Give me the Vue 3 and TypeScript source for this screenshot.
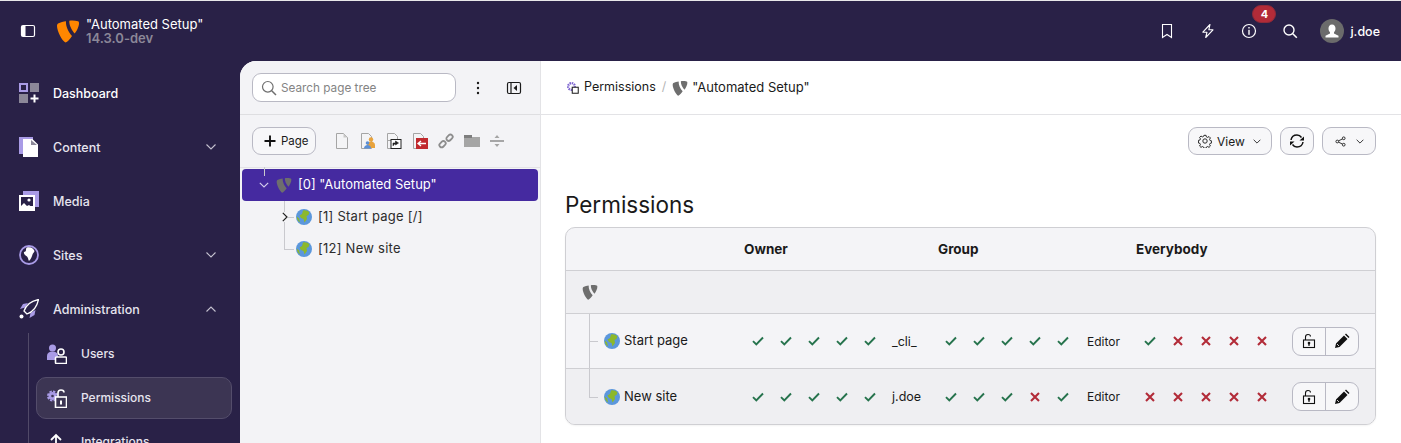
<script setup lang="ts">
interface NavItem {
  label: string;
  icon: string;
  chevron?: 'up' | 'down';
}

interface PermRow {
  name: string;
  owner: number[];
  ownerName: string;
  group: number[];
  groupName: string;
  everybody: number[];
}

const navItems: NavItem[] = [
  { label: 'Dashboard', icon: 'dashboard' },
  { label: 'Content', icon: 'content', chevron: 'down' },
  { label: 'Media', icon: 'media' },
  { label: 'Sites', icon: 'sites', chevron: 'down' },
  { label: 'Administration', icon: 'admin', chevron: 'up' },
];

const rows: PermRow[] = [
  { name: 'Start page', owner: [1, 1, 1, 1, 1], ownerName: '_cli_', group: [1, 1, 1, 1, 1], groupName: 'Editor', everybody: [1, 0, 0, 0, 0] },
  { name: 'New site', owner: [1, 1, 1, 1, 1], ownerName: 'j.doe', group: [1, 1, 1, 0, 1], groupName: 'Editor', everybody: [0, 0, 0, 0, 0] },
];

const logoBody = 'M2 4.500C4.500 3.200 7.500 2.400 10 2.200C9.500 7 12.500 13 16 17C14 20 11.500 23 9.500 23.500C6 22 1 12 1 7C1 6 1.400 5 2 4.500Z';
const logoWing = 'M13.300 1.800C15.500 1.500 19 1.500 22 2.200C23 2.500 23 3.500 23 4.500C23 7 21 12 18.500 14.500C15.500 11 13 6 13.300 1.800Z';
</script>

<template>
  <div class="app">
    <header class="topbar">
      <svg class="top-toggle" viewBox="0 0 16 16" width="16" height="16">
        <rect x="1.500" y="2.500" width="13" height="11" rx="1.500" fill="none" stroke="#fff" stroke-width="1.200" />
        <rect x="2" y="3" width="3.500" height="10" fill="#fff" />
      </svg>
      <svg class="top-logo" viewBox="0 0 24 24" width="24" height="24">
        <path :d="logoBody" fill="#ff8700" />
        <path :d="logoWing" fill="#ff8700" />
      </svg>
      <div class="site">
        <div class="site-name">"Automated Setup"</div>
        <div class="site-version">14.3.0-dev</div>
      </div>
      <div class="top-actions">
        <svg viewBox="0 0 16 16" width="16" height="16"><path d="M3.500 1.500h9v13L8 11.500l-4.500 3z" fill="none" stroke="#fff" stroke-width="1.100" /></svg>
        <svg viewBox="0 0 16 16" width="16" height="16"><path d="M10 1.500 2.800 9.200H7L5.700 14.500 13 6.800H8.800z" fill="none" stroke="#fff" stroke-width="1.100" stroke-linejoin="round" /></svg>
        <span class="info">
          <svg viewBox="0 0 16 16" width="16" height="16">
            <circle cx="8" cy="8" r="6.500" fill="none" stroke="#fff" stroke-width="1.200" />
            <rect x="7.300" y="6.800" width="1.400" height="5" fill="#fff" />
            <rect x="7.300" y="4" width="1.400" height="1.500" fill="#fff" />
          </svg>
          <span class="badge">4</span>
        </span>
        <svg viewBox="0 0 16 16" width="16" height="16"><circle cx="7" cy="7" r="5" fill="none" stroke="#fff" stroke-width="1.400" /><path d="m10.800 10.800 4 4" stroke="#fff" stroke-width="1.600" /></svg>
        <div class="user">
          <span class="avatar">
            <svg viewBox="0 0 24 24" width="24" height="24">
              <circle cx="12" cy="12" r="12" fill="#6b6b6b" />
              <path d="M12 5.500c2.300 0 3.500 1.800 3.500 4 0 1.600-.7 3-1.500 3.800v1.200l4.500 2.200v1.800h-13v-1.800l4.500-2.200v-1.200c-.8-.8-1.500-2.200-1.500-3.800 0-2.200 1.200-4 3.500-4z" fill="#fff" />
            </svg>
          </span>
          <span class="user-name">j.doe</span>
        </div>
      </div>
    </header>

    <div class="body">
      <aside class="sidebar">
        <div v-for="item in navItems" :key="item.label" class="nav-item">
          <svg class="nav-icon" viewBox="0 0 20 20" width="20" height="20">
            <template v-if="item.icon === 'dashboard'">
              <rect x="1" y="1" width="7" height="7" fill="none" stroke="#a99be6" stroke-width="2" />
              <rect x="11" y="0" width="9" height="9" fill="#8b8798" />
              <rect x="0" y="11" width="9" height="9" fill="#8b8798" />
              <path d="M15.500 11.500v8M11.500 15.500h8" stroke="#fff" stroke-width="2" />
            </template>
            <template v-else-if="item.icon === 'content'">
              <rect x="0" y="0" width="14" height="17" fill="#a99be6" />
              <path d="M5 3h8l5 5v11H5z" fill="#fff" stroke="#fff" stroke-width="2" />
              <path d="M12 3l6 5h-6z" fill="#8b8798" />
            </template>
            <template v-else-if="item.icon === 'media'">
              <rect x="4" y="0" width="16" height="16" fill="#a99be6" />
              <rect x="0" y="4" width="16" height="16" fill="#fff" />
              <rect x="2" y="6" width="12" height="9" fill="#292147" />
              <circle cx="10" cy="9" r="1.600" fill="#fff" />
              <path d="M2 15l3-3 3 3 2-1 4 3v1H2z" fill="#fff" />
            </template>
            <template v-else-if="item.icon === 'sites'">
              <circle cx="10" cy="10" r="9" fill="#292147" stroke="#a99be6" stroke-width="1.800" />
              <path d="M8 2.500c3-1 6.500.5 7.500 3.500-.3 1.500-1.500 2-2 3.500-.5 2-1.500 4.500-3.500 6.500-1-1.500-.5-3-2-4.500C5.500 10 4.500 8.500 5 7c1 0 2-1 2-2 0-1 0-2 1-2.500z" fill="#fff" />
            </template>
            <template v-else>
              <path d="M6 8.500 1 10l3-5 5-1zM11.500 14l-1 5 5-3 1-5z" fill="#a99be6" />
              <path d="M5 12C7 6 12 2 19.500.5 18 8 14 13 8 15z" fill="#292147" stroke="#fff" stroke-width="1.300" />
              <circle cx="2.500" cy="17.500" r="2" fill="#fff" />
            </template>
          </svg>
          <span class="nav-label" :class="{ 'nav-label-bright': item.icon === 'dashboard' }">{{ item.label }}</span>
          <svg v-if="item.chevron" class="nav-chevron" :class="{ up: item.chevron === 'up' }" viewBox="0 0 10 6" width="10" height="6">
            <path d="M.5.500 5 5 9.500.500" fill="none" stroke="#c5c2d0" stroke-width="1.100" />
          </svg>
        </div>
        <div class="sub-nav">
          <div class="sub-item">
            <svg viewBox="0 0 20 20" width="20" height="20">
              <circle cx="5.500" cy="4" r="3.500" fill="#a99be6" />
              <path d="M0 16v-4c0-3 2-4.500 5.500-4.500S11 9 11 12v4z" fill="#a99be6" />
              <circle cx="14" cy="8" r="3" fill="#292147" stroke="#fff" stroke-width="1.600" />
              <rect x="8.500" y="13" width="11" height="6.500" rx="1" fill="#292147" stroke="#fff" stroke-width="1.600" />
            </svg>
            <span>Users</span>
          </div>
          <div class="sub-item active">
            <svg viewBox="0 0 20 20" width="20" height="20">
              <circle cx="5.500" cy="8" r="4.600" fill="none" stroke="#a99be6" stroke-width="1.800" stroke-dasharray="2.400 1.200" />
              <circle cx="5.500" cy="8" r="4" fill="#a99be6" />
              <circle cx="5.500" cy="8" r="1.300" fill="#3c3553" />
              <path d="M11 9V5c0-2 1-3 3-3s3 1 3 2.500" fill="none" stroke="#fff" stroke-width="1.600" />
              <rect x="8.500" y="9" width="11" height="10.500" fill="#3c3553" stroke="#fff" stroke-width="1.600" />
              <rect x="13" y="12.500" width="2" height="4" fill="#fff" />
            </svg>
            <span>Permissions</span>
          </div>
          <div class="sub-item">
            <svg viewBox="0 0 20 20" width="20" height="20">
              <path d="M9 20V3M4 8l5-5 5 5" fill="none" stroke="#fff" stroke-width="1.800" />
              <circle cx="15" cy="15" r="3" fill="#a99be6" />
            </svg>
            <span>Integrations</span>
          </div>
        </div>
      </aside>

      <div class="main">
        <section class="tree-panel">
          <div class="tree-search">
            <div class="search-input">
              <svg viewBox="0 0 16 16" width="16" height="16"><circle cx="6.800" cy="6.800" r="5.300" fill="none" stroke="#6f6f6f" stroke-width="1.200" /><path d="m10.700 10.700 4.300 4.300" stroke="#6f6f6f" stroke-width="1.500" /></svg>
              <span>Search page tree</span>
            </div>
            <svg class="dots" viewBox="0 0 4 14" width="4" height="14"><circle cx="2" cy="2" r="1.200" /><circle cx="2" cy="7" r="1.200" /><circle cx="2" cy="12" r="1.200" /></svg>
            <svg class="collapse" viewBox="0 0 16 16" width="16" height="16">
              <rect x="1.500" y="2.500" width="13" height="11" rx="1.500" fill="none" stroke="#1a1a1a" stroke-width="1.200" />
              <path d="M5 3v10" stroke="#1a1a1a" stroke-width="1.200" />
              <path d="M11 5v6L7.500 8z" fill="#1a1a1a" />
            </svg>
          </div>
          <div class="tree-toolbar">
            <button class="btn btn-page">
              <svg viewBox="0 0 12 12" width="12" height="12"><path d="M6 .5v11M.5 6h11" stroke="#111" stroke-width="1.900" /></svg>
              Page
            </button>
            <div class="tool-icons">
              <svg viewBox="0 0 16 16" width="16" height="16"><path d="M2.500.500h7l4 4v11h-11z" fill="#f4f4f6" stroke="#a5a5a5" /><path d="M9.500.500l4 4h-4z" fill="#c8c8c8" /></svg>
              <svg viewBox="0 0 16 16" width="16" height="16"><path d="M1.500.500h7l3 3v12h-10z" fill="#f4f4f6" stroke="#a5a5a5" /><circle cx="11" cy="6.500" r="2.200" fill="#e8a33d" /><path d="M7 12c0-2 2-3.500 4-3.500s4 1.500 4 3.500v3H7z" fill="#e8a33d" /><path d="M4 15.500c0-2 1.500-3.500 3.500-3.500s3.500 1.500 3.500 3.500z" fill="#5b8fd6" /><circle cx="7.500" cy="10" r="1.800" fill="#5b8fd6" /></svg>
              <svg viewBox="0 0 16 16" width="16" height="16"><path d="M1.500.500h7l3 3v4h-10z" fill="#f4f4f6" stroke="#a5a5a5" /><path d="M1.500 7v8.500h4" fill="none" stroke="#a5a5a5" /><rect x="5" y="6.500" width="10" height="9" fill="#fff" stroke="#222" /><path d="M7 13v-3h3M9.500 8l3 2-3 2z" fill="#222" stroke="#222" stroke-width=".6" /></svg>
              <svg viewBox="0 0 16 16" width="16" height="16"><path d="M1.500.500h7l3 3v12h-10z" fill="#f4f4f6" stroke="#a5a5a5" /><rect x="4" y="5" width="12" height="11" fill="#c1292e" /><path d="M6 10.500h8M9 8l-3 2.500L9 13" fill="none" stroke="#fff" stroke-width="1.300" /></svg>
              <svg viewBox="0 0 16 16" width="16" height="16" fill="none" stroke="#8d8d8d" stroke-width="1.800"><rect x="1" y="9" width="7" height="4.500" rx="2.200" transform="rotate(-45 4.500 11.200)" /><rect x="8" y="2.500" width="7" height="4.500" rx="2.200" transform="rotate(-45 11.500 4.700)" /></svg>
              <svg viewBox="0 0 16 16" width="16" height="16"><path d="M0 2h7l1 2h8v10H0z" fill="#a5a5a5" /><rect x="0" y="2" width="8" height="3" fill="#7e7e7e" /></svg>
              <svg viewBox="0 0 14 14" width="14" height="14"><path d="M0 7h14" stroke="#8d8d8d" stroke-width="1.400" /><path d="M7 1l2.500 3h-5zM7 13l2.500-3h-5z" fill="#a5a5a5" /></svg>
            </div>
          </div>
          <div class="tree">
            <div class="tree-root">
              <svg class="chev" viewBox="0 0 10 6" width="10" height="6"><path d="M.8.800 5 5 9.200.800" fill="none" stroke="#cfc8ea" stroke-width="1.200" /></svg>
              <svg viewBox="0 0 24 24" width="16" height="16"><path :d="logoBody" fill="#6e6e6e" /><path :d="logoWing" fill="#6e6e6e" /></svg>
              <span>[0] "Automated Setup"</span>
            </div>
            <div class="tree-child">
              <svg class="chev-right" viewBox="0 0 6 10" width="6" height="10"><path d="M.8.800 5 5 .8 9.200" fill="none" stroke="#222" stroke-width="1.200" /></svg>
              <svg viewBox="0 0 16 16" width="16" height="16"><circle cx="8" cy="8" r="8" fill="#5b97dc" /><path d="M7 1.500c2-.8 5 0 6.500 2l-1 2.500-2 1 .5 3-2.500 3.500-1-3.500L5 9 3.500 6.500 6 5z" fill="#8cb82b" /><path d="M.8 7.500 3 9.500l1 4C2 12.500.7 10 .8 7.500z" fill="#8cb82b" /></svg>
              <span>[1] Start page [/]</span>
            </div>
            <div class="tree-child last">
              <svg viewBox="0 0 16 16" width="16" height="16"><circle cx="8" cy="8" r="8" fill="#5b97dc" /><path d="M7 1.500c2-.8 5 0 6.500 2l-1 2.500-2 1 .5 3-2.500 3.500-1-3.500L5 9 3.500 6.500 6 5z" fill="#8cb82b" /><path d="M.8 7.500 3 9.500l1 4C2 12.500.7 10 .8 7.500z" fill="#8cb82b" /></svg>
              <span>[12] New site</span>
            </div>
          </div>
        </section>

        <section class="content">
          <div class="crumbs">
            <svg viewBox="0 0 16 16" width="12" height="12">
              <circle cx="6" cy="6" r="4.500" fill="none" stroke="#7c63d0" stroke-width="3" stroke-dasharray="2 1" />
              <rect x="7" y="7" width="8" height="8" fill="#fff" stroke="#222" stroke-width="1.400" />
            </svg>
            <span class="crumb-first">Permissions</span>
            <span class="crumb-sep">/</span>
            <svg viewBox="0 0 24 24" width="16" height="16"><path :d="logoBody" fill="#6e6e6e" /><path :d="logoWing" fill="#6e6e6e" /></svg>
            <span class="crumb-last">"Automated Setup"</span>
          </div>
          <div class="doc-bar">
            <button class="btn btn-view">
              <svg viewBox="0 0 16 16" width="14" height="14" fill="none" stroke="#222" stroke-width="1.100"><circle cx="8" cy="8" r="2.500" /><path d="M6.800 1.500h2.400l.4 1.800 1.400.6 1.600-1 1.600 1.600-1 1.600.6 1.400 1.800.4v2.400l-1.800.4-.6 1.400 1 1.600-1.600 1.600-1.600-1-1.400.6-.4 1.400H6.800l-.4-1.400-1.400-.6-1.600 1-1.600-1.600 1-1.600-.6-1.400-1.700-.4V7.300l1.700-.4.600-1.400-1-1.600 1.600-1.600 1.600 1 1.400-.6z" /></svg>
              View
              <svg class="view-chev" viewBox="0 0 10 6" width="8" height="5"><path d="M.8.800 5 5 9.200.800" fill="none" stroke="#333" stroke-width="1.200" /></svg>
            </button>
            <button class="btn btn-icon">
              <svg viewBox="0 0 16 16" width="16" height="16" fill="none" stroke="#111" stroke-width="1.500"><path d="M2 7c.5-3 3-5 6-5 2 0 3.500 1 4.500 2.500" /><path d="M14 9c-.5 3-3 5-6 5-2 0-3.500-1-4.500-2.500" /><path d="M15 3.500v4h-4.500zM1 12.500v-4h4.500z" fill="#111" stroke="none" /></svg>
            </button>
            <button class="btn btn-share">
              <svg viewBox="0 0 12 12" width="11" height="11" fill="none" stroke="#222" stroke-width="1"><circle cx="2.500" cy="6" r="1.500" /><circle cx="9.500" cy="2.500" r="1.500" /><circle cx="9.500" cy="9.500" r="1.500" /><path d="M3.800 5.300 8.200 3.200M3.800 6.700l4.400 2.100" /></svg>
              <svg viewBox="0 0 10 6" width="8" height="5"><path d="M.8.800 5 5 9.200.800" fill="none" stroke="#333" stroke-width="1.200" /></svg>
            </button>
          </div>
          <div class="doc">
            <h1>Permissions</h1>
            <div class="table">
              <div class="row row-head">
                <span class="head-owner">Owner</span>
                <span class="head-group">Group</span>
                <span class="head-everybody">Everybody</span>
              </div>
              <div class="row row-root">
                <svg viewBox="0 0 24 24" width="16" height="16"><path :d="logoBody" fill="#6e6e6e" /><path :d="logoWing" fill="#6e6e6e" /></svg>
              </div>
              <div v-for="(r, i) in rows" :key="r.name" class="row row-page" :class="{ 'row-alt': i === 1 }">
                <div class="page-name">
                  <svg viewBox="0 0 16 16" width="16" height="16"><circle cx="8" cy="8" r="8" fill="#5b97dc" /><path d="M7 1.500c2-.8 5 0 6.500 2l-1 2.500-2 1 .5 3-2.500 3.500-1-3.500L5 9 3.500 6.500 6 5z" fill="#8cb82b" /><path d="M.8 7.500 3 9.500l1 4C2 12.500.7 10 .8 7.500z" fill="#8cb82b" /></svg>
                  <span>{{ r.name }}</span>
                </div>
                <template v-for="(set, s) in [r.owner, r.group, r.everybody]" :key="s">
                  <span v-for="(on, p) in set" :key="p" class="perm">
                    <svg v-if="on" viewBox="0 0 12 10" width="12" height="10"><path d="M1 5.200 4.300 8.500 11 1.500" fill="none" stroke="#26734d" stroke-width="1.900" /></svg>
                    <svg v-else viewBox="0 0 10 10" width="10" height="10"><path d="M1 1l8 8M9 1 1 9" fill="none" stroke="#b22b38" stroke-width="2.100" /></svg>
                  </span>
                  <span v-if="s === 0" class="perm-owner">{{ r.ownerName }}</span>
                  <span v-if="s === 1" class="perm-group">{{ r.groupName }}</span>
                </template>
                <div class="btn-group">
                  <button>
                    <svg viewBox="0 0 16 16" width="16" height="16"><path d="M4.500 7V4c0-1.500 1-2.500 2.500-2.500S9.500 2.500 9.500 3.500" fill="none" stroke="#111" stroke-width="1.100" /><rect x="2.500" y="7" width="11" height="7.500" fill="none" stroke="#111" stroke-width="1.100" /><circle cx="8" cy="10" r="1.300" fill="#111" /><rect x="7.300" y="10" width="1.400" height="2.800" fill="#111" /></svg>
                  </button>
                  <button>
                    <svg viewBox="0 0 16 16" width="16" height="16"><path d="M1 15l1-4.500 8-8L13.500 6l-8 8zM11 1.500l1-1 3.500 3.500-1 1z" fill="#111" /><path d="M3 11l2 2" stroke="#fff" stroke-width=".8" /></svg>
                  </button>
                </div>
              </div>
            </div>
          </div>
        </section>
      </div>
    </div>
  </div>
</template>

<style scoped>
.app {
  width: 1401px;
  height: 443px;
  overflow: hidden;
  background: #292147;
  border-top: 1px solid #e8e8ea;
  box-sizing: border-box;
  font-family: Inter, "Liberation Sans", sans-serif;
  font-size: 13px;
  color: #1a1a1a;
}

.topbar {
  height: 60px;
  display: flex;
  align-items: center;
  color: #fff;
}

.top-toggle {
  margin-left: 20px;
}

.top-logo {
  margin-left: 20px;
}

.site {
  margin-left: 6px;
  line-height: 14px;
  font-size: 13px;
}

.site-version {
  color: #8b8798;
  font-weight: 600;
}

.top-actions {
  margin-left: auto;
  display: flex;
  align-items: center;
  gap: 25px;
  padding-right: 21px;
}

.info {
  position: relative;
  display: flex;
}

.badge {
  position: absolute;
  top: -18px;
  left: 11px;
  width: 24px;
  height: 18px;
  box-sizing: border-box;
  border: 1px solid #8f2a38;
  border-radius: 9px;
  background: #b22b38;
  color: #fff;
  font-size: 11px;
  font-weight: 700;
  display: flex;
  align-items: center;
  justify-content: center;
}

.user {
  display: flex;
  align-items: center;
  gap: 6px;
  margin-left: -3px;
  font-size: 12.5px;
  font-weight: 500;
}

.avatar {
  display: flex;
}

.body {
  display: flex;
  height: 382px;
}

.sidebar {
  width: 240px;
  flex-shrink: 0;
  color: #e6e4ee;
  padding-top: 5px;
  box-sizing: border-box;
  font-size: 12.5px;
}

.nav-item {
  height: 54px;
  display: flex;
  align-items: center;
  padding: 0 24px 0 19px;
  font-weight: 500;
}

.nav-icon {
  flex-shrink: 0;
}

.nav-label {
  margin-left: 14px;
}

.nav-label-bright {
  color: #fff;
}

.nav-chevron {
  margin-left: auto;
}

.nav-chevron.up {
  transform: rotate(180deg);
}

.sub-nav {
  margin-left: 28px;
  border-left: 1px solid #514a68;
  padding: 0 8px 0 7px;
  margin-top: -3px;
}

.sub-item {
  height: 42px;
  box-sizing: border-box;
  margin-bottom: 2px;
  display: flex;
  align-items: center;
  gap: 14px;
  padding-left: 10px;
  font-size: 12px;
  font-weight: 500;
  border: 1px solid transparent;
  border-radius: 10px;
}

.sub-item span {
  margin-bottom: 2px;
}

.sub-item svg {
  flex-shrink: 0;
}

.sub-item.active {
  background: #3c3553;
  border-color: #544d6b;
}

.main {
  flex: 1;
  display: flex;
  background: #fff;
  border-radius: 16px 0 0 0;
  overflow: hidden;
  min-width: 0;
}

.tree-panel {
  width: 301px;
  flex-shrink: 0;
  background: #f3f3f6;
  border-right: 1px solid #e3e3e6;
  box-sizing: border-box;
  color: #2c2c2c;
}

.tree-search {
  height: 53px;
  display: flex;
  align-items: center;
  padding-left: 12px;
  border-bottom: 1px solid #dedee1;
}

.search-input {
  width: 204px;
  height: 29px;
  box-sizing: border-box;
  background: #fff;
  border: 1px solid #b9b9c4;
  border-radius: 9px;
  display: flex;
  align-items: center;
  gap: 4px;
  padding-left: 8px;
  font-size: 11.75px;
  color: #848484;
}

.dots {
  margin-left: 20px;
  fill: #1a1a1a;
}

.collapse {
  margin-left: 26px;
}

.tree-toolbar {
  height: 52px;
  display: flex;
  align-items: center;
  padding-left: 12px;
  border-bottom: 1px solid #e3e3e6;
}

.btn {
  height: 28px;
  box-sizing: border-box;
  background: #f7f7f9;
  border: 1px solid #b9b9c4;
  border-radius: 9px;
  display: inline-flex;
  align-items: center;
  gap: 5px;
  padding: 0 9px;
  font-family: inherit;
  font-size: 11.5px;
  color: #1a1a1a;
}

.btn svg {
  flex-shrink: 0;
}

.btn-page {
  width: 64px;
  padding: 0 0 0 11px;
  gap: 5px;
  flex-shrink: 0;
}

.btn-view {
  width: 84px;
  font-size: 12px;
}

.view-chev {
  margin-left: 3px;
}

.tool-icons {
  display: flex;
  align-items: center;
  gap: 10px;
  margin-left: 18px;
}

.tree {
  padding: 1px 2px 0;
}

.tree-root {
  position: relative;
  height: 32px;
  display: flex;
  align-items: center;
  background: #452aa0;
  color: #fff;
  border-radius: 4px;
  padding-left: 17px;
}

.tree-root::before {
  content: '';
  position: absolute;
  left: 22px;
  top: -2px;
  height: 9px;
  border-left: 1px solid #c9c9ce;
}

.tree-root .chev {
  margin-right: 7px;
}

.tree-root span {
  margin: 0 0 2px 6px;
}

.tree-child {
  position: relative;
  height: 32px;
  display: flex;
  align-items: center;
  padding-left: 54px;
}

.tree-child span {
  margin: 0 0 2px 6px;
  letter-spacing: .25px;
}

.tree-child::before {
  content: '';
  position: absolute;
  left: 42px;
  top: 0;
  bottom: 0;
  border-left: 1px solid #c9c9ce;
}

.tree-child::after {
  content: '';
  position: absolute;
  left: 42px;
  top: 16px;
  width: 10px;
  border-top: 1px solid #c9c9ce;
}

.tree-child.last::before {
  bottom: 16px;
}

.chev-right {
  position: absolute;
  left: 40px;
  top: 11px;
  z-index: 1;
  background: #f3f3f6;
}

.content {
  flex: 1;
  min-width: 0;
}

.crumbs {
  height: 53px;
  display: flex;
  align-items: center;
  gap: 6px;
  padding-left: 26px;
  font-size: 12.5px;
  border-bottom: 1px solid #e3e3e6;
}

.crumbs span {
  margin-bottom: 2px;
}

.crumb-first {
  margin-left: -1px;
}

.crumb-sep {
  color: #b5b5b5;
}

.crumb-last {
  margin-left: -2px;
  font-size: 13px;
}

.doc-bar {
  height: 52px;
  display: flex;
  align-items: center;
  justify-content: flex-end;
  gap: 8px;
  padding-right: 25px;
}

.btn-icon {
  width: 34px;
  justify-content: center;
  padding: 0;
}

.btn-share {
  width: 54px;
  justify-content: center;
  gap: 10px;
  padding: 0;
}

.doc {
  padding: 0 25px 0 24px;
}

h1 {
  margin: 23px 0 0;
  font-size: 22.5px;
  font-weight: 400;
  line-height: 29px;
  color: #1a1a1a;
}

.table {
  margin-top: 8px;
  border: 1px solid #cfcfd3;
  border-radius: 10px;
  overflow: hidden;
  background: #f4f4f7;
  box-shadow: 0 1px 2px rgba(0, 0, 0, .05);
}

.row {
  display: grid;
  grid-template-columns: 178px repeat(5, 28px) 53px repeat(5, 28px) 59px repeat(5, 28px) auto;
  align-items: center;
  border-bottom: 1px solid #cfcfd3;
  box-sizing: border-box;
}

.row:last-child {
  border-bottom: 0;
}

.row-head {
  height: 43px;
  font-weight: 700;
  font-size: 13.5px;
}

.head-owner {
  grid-column: 2 / span 5;
}

.head-group {
  grid-column: 8 / span 5;
  margin-left: 1px;
}

.head-everybody {
  grid-column: 14 / span 5;
}

.row-root {
  height: 43px;
  background: #efeff2;
  padding-left: 16px;
  display: flex;
}

.row-page {
  height: 55px;
}

.row-alt {
  background: #efeff2;
}

.page-name {
  position: relative;
  display: flex;
  align-items: center;
  gap: 4px;
  padding-left: 38px;
  height: 100%;
}

.page-name span {
  margin-bottom: 2px;
}

.page-name::before {
  content: '';
  position: absolute;
  left: 23px;
  top: 0;
  bottom: 0;
  border-left: 1px solid #c9c9ce;
}

.row-alt .page-name::before {
  bottom: 50%;
}

.page-name::after {
  content: '';
  position: absolute;
  left: 23px;
  top: 50%;
  width: 9px;
  border-top: 1px solid #c9c9ce;
}

.perm {
  display: flex;
  justify-content: center;
}

.perm-owner,
.perm-group {
  padding-left: 8px;
  font-size: 12.5px;
}

.perm-group {
  padding-left: 10px;
  font-size: 12px;
}

.btn-group {
  display: flex;
  margin-left: 16px;
  width: 67px;
  height: 29px;
  box-sizing: border-box;
  border: 1px solid #b9b9c4;
  border-radius: 9px;
  overflow: hidden;
  background: #f7f7f9;
}

.btn-group button {
  flex: 1;
  padding: 0;
  border: 0;
  background: transparent;
  display: flex;
  align-items: center;
  justify-content: center;
}

.btn-group button + button {
  border-left: 1px solid #b9b9c4;
}
</style>

<style>
html,
body {
  margin: 0;
  overflow: hidden;
}
</style>
